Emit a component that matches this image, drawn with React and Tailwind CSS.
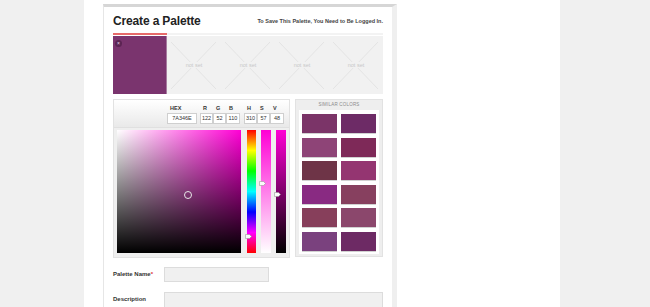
import React from 'react';

const similar = [
  ['#7b3468', '#6d2b66'],
  ['#8e4477', '#7e2958'],
  ['#6e3447', '#943571'],
  ['#892a82', '#87405f'],
  ['#873f5b', '#8b476c'],
  ['#7a417e', '#6d2a64'],
];

function EmptySwatch() {
  return (
    <div className="relative w-[54px] h-[58px] bg-[#f1f1f1] flex items-center justify-center">
      <svg className="absolute inset-0" width="54" height="58">
        <line x1="4" y1="6" x2="49" y2="53" stroke="#e0e0e0" strokeWidth="0.8" />
        <line x1="49" y1="6" x2="4" y2="53" stroke="#e0e0e0" strokeWidth="0.8" />
      </svg>
      <span className="relative text-[5.5px] leading-[6px] text-[#c8c8c8] bg-[#f1f1f1] px-[1px]">not set</span>
    </div>
  );
}

function Field({ label, value, w }) {
  return (
    <div className="flex flex-col">
      <span className="h-[8px] text-[5.5px] leading-[6px] font-bold text-[#333] pl-[3px]">{label}</span>
      <div className={`${w} h-[11px] bg-white border border-[#cfcfcf] flex items-center justify-center text-[5.5px] text-[#333]`}>{value}</div>
    </div>
  );
}

function Pointer() {
  return (
    <svg width="7" height="5" viewBox="0 0 7 5">
      <path d="M0.5 0.5 H4.5 L6.5 2.5 L4.5 4.5 H0.5 Z" fill="#fafafa" stroke="#9a9a9a" strokeWidth="0.6" />
    </svg>
  );
}

export default function App() {
  return (
    <div className="w-[650px] h-[307px] overflow-hidden bg-[#f0f0f0] font-['Liberation_Sans',Arial,sans-serif]">
      <div className="ml-[84px] w-[476px] h-full bg-white pt-[4px] pl-[19px]">
        <div className="w-[294px] h-[303px] border-t-[3px] border-t-[#d6d6d6] border-l border-l-[#e6e6e6] border-r-[5px] border-r-[#efefef] px-[9px]">
          {/* header */}
          <div className="flex justify-between items-start pt-[8px] h-[26px]">
            <h1 className="text-[12px] leading-[12px] font-bold text-[#222] tracking-[-0.15px]">Create a Palette</h1>
            <p className="mt-[2.8px] text-[5.5px] leading-[6px] font-bold text-[#444]">To Save This Palette, You Need to Be Logged In.</p>
          </div>

          <div className="flex h-[2px]">
            <div className="w-[54px] bg-[#e76a6a]" />
            <div className="flex-1 bg-[#f3f3f3]" />
          </div>

          {/* palette swatches */}
          <div className="flex mt-[1px]">
            <div className="relative w-[54px] h-[58px] bg-[#7a346e] border-r border-r-[#a77c9f]">
              <div className="absolute left-[2px] top-[4px] w-[7px] h-[7px] rounded-full bg-[#5b2453] flex items-center justify-center text-[5px] leading-[5px] text-[#e8d8e4]">×</div>
            </div>
            <EmptySwatch />
            <EmptySwatch />
            <EmptySwatch />
            <EmptySwatch />
          </div>

          {/* picker */}
          <div className="flex gap-[5px] mt-[5px]">
            <div className="w-[177px] h-[159px] border border-[#e2e2e2] bg-[#efefef]">
              <div className="h-[28px] bg-[linear-gradient(to_bottom,#ffffff,#e9e9e9)] border-b border-b-[#e0e0e0] flex pl-[53px] pt-[5px] gap-[3px]">
                <Field label="HEX" value="7A346E" w="w-[30px]" />
                <div className="flex">
                  <Field label="R" value="122" w="w-[13px]" />
                  <Field label="G" value="52" w="w-[13px]" />
                  <Field label="B" value="110" w="w-[14px]" />
                </div>
                <div className="flex ml-[1px]">
                  <Field label="H" value="310" w="w-[13px]" />
                  <Field label="S" value="57" w="w-[13px]" />
                  <Field label="V" value="48" w="w-[14px]" />
                </div>
              </div>
              <div className="flex pl-[3px] pt-[2px] gap-[6px]">
                <div className="relative w-[124px] h-[123px] bg-[linear-gradient(to_top,#000,transparent),linear-gradient(to_right,#fff,#ff00d5)]">
                  <div className="absolute left-[67px] top-[61px] w-[8px] h-[8px] rounded-full border border-[#e8e8e8]" />
                </div>
                <div className="relative w-[9px] h-[123px] bg-[linear-gradient(to_bottom,#f00_0%,#ff0_16.67%,#0f0_33.33%,#0ff_50%,#00f_66.67%,#f0f_83.33%,#f00_100%)]">
                  <div className="absolute -left-[2px] top-[104px]"><Pointer /></div>
                </div>
                <div className="relative w-[10px] h-[123px] ml-[-1px] bg-[linear-gradient(to_bottom,#ff00d5,#fff)]">
                  <div className="absolute -left-[2px] top-[51px]"><Pointer /></div>
                </div>
                <div className="relative w-[10px] h-[123px] ml-[-1px] bg-[linear-gradient(to_bottom,#ff00d5,#000)]">
                  <div className="absolute -left-[2px] top-[62px]"><Pointer /></div>
                </div>
              </div>
            </div>

            <div className="w-[88px] h-[158px] border border-[#e2e2e2] bg-[#eeeeee] flex flex-col">
              <div className="h-[10px] flex items-center justify-center text-[4.5px] text-[#8a8a8a] tracking-[0.2px]">SIMILAR COLORS</div>
              <div className="mx-[3px] bg-white pl-[3px] pt-[4px] pb-[3px] grid grid-cols-[35px_35px] gap-x-[4px] gap-y-[4.5px]">
                {similar.flat().map((c, i) => (
                  <div key={i} className="h-[19px] shadow-[0_1px_0_rgba(0,0,0,0.18)]" style={{ background: c }} />
                ))}
              </div>
            </div>
          </div>

          {/* form */}
          <div className="flex items-center mt-[9px]">
            <label className="w-[51px] text-[6px] font-bold text-[#333]">Palette Name<span className="text-[#d33]">*</span></label>
            <div className="w-[105px] h-[15px] bg-[#f0f0f0] border border-[#dcdcdc]" />
          </div>
          <div className="flex items-start mt-[10px]">
            <label className="w-[51px] pt-[3px] text-[6px] font-bold text-[#333]">Description</label>
            <div className="w-[219px] h-[30px] bg-[#f0f0f0] border border-[#dcdcdc]" />
          </div>
        </div>
      </div>
    </div>
  );
}
